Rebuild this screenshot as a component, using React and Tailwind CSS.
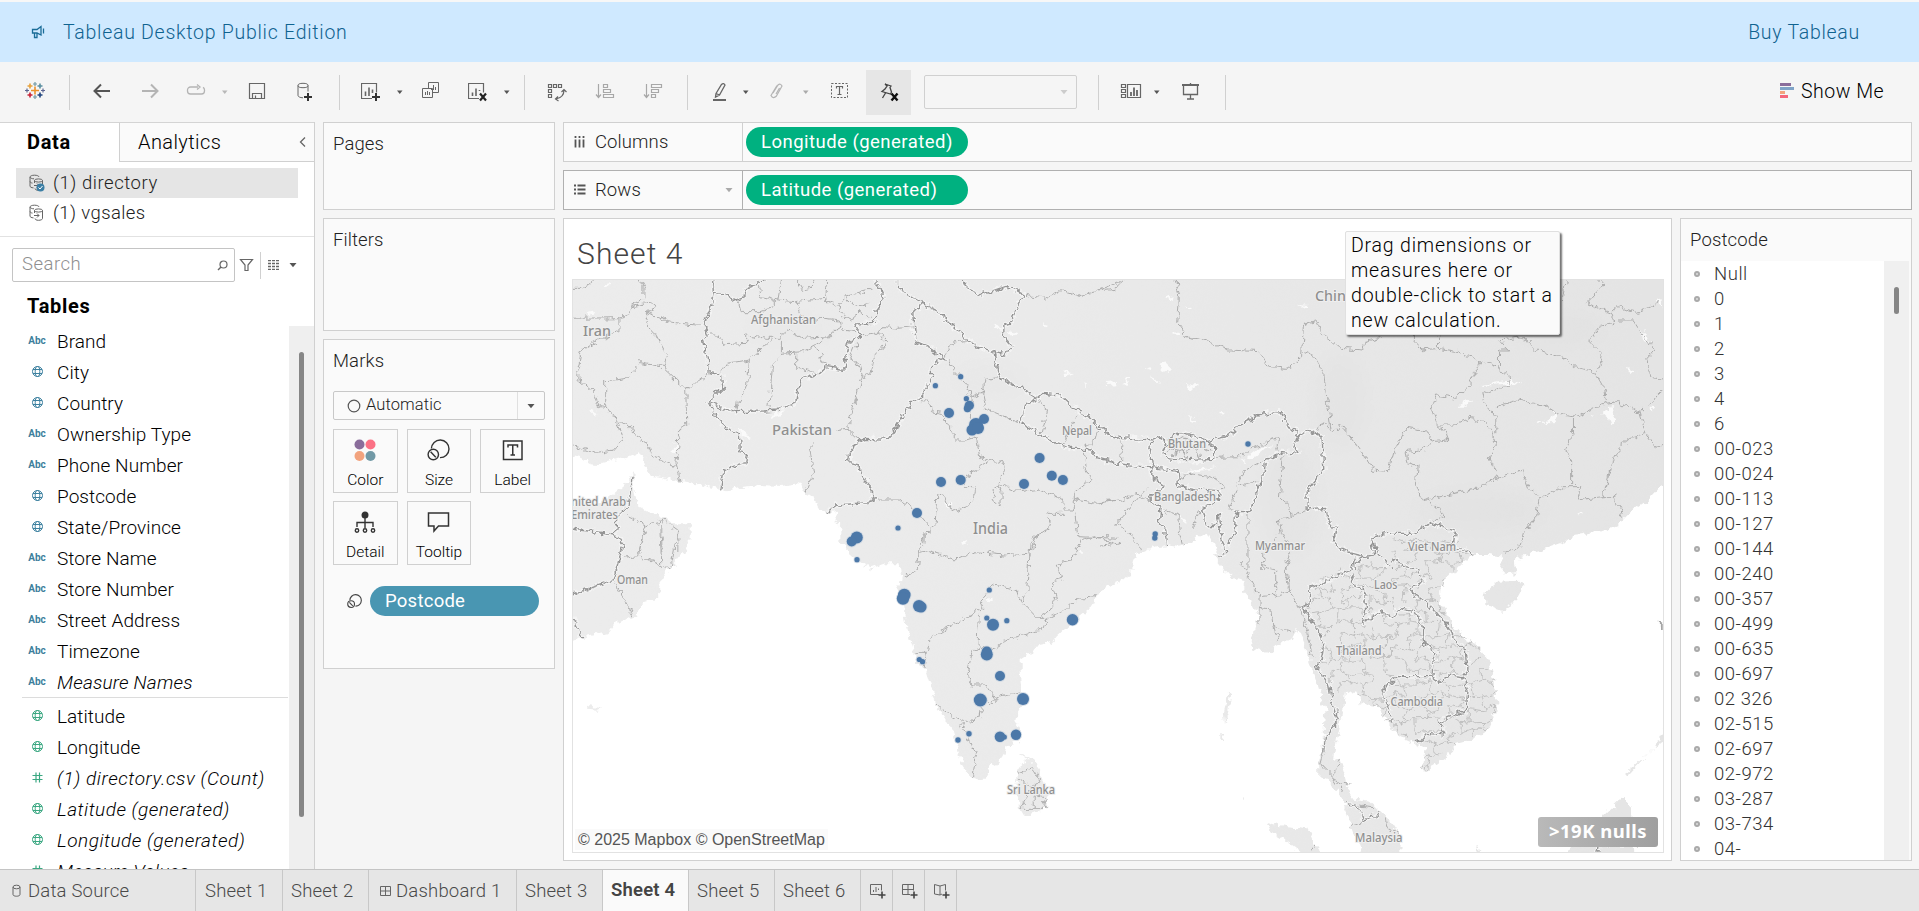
import React from 'react';

const Ic = ({ w = 20, h = 20, className = '', children }) => (
  <svg width={w} height={h} viewBox={`0 0 ${w} ${h}`} fill="none" stroke="#666" strokeWidth="1" className={`shrink-0 ${className}`}>
    {children}
  </svg>
);

const Caret = ({ className = '', color = '#555', big }) => (
  <svg width="8" height="8" viewBox="0 0 8 8" className={`shrink-0 ${className}`}>
    <path d={big ? 'M.5 2h7L4 6.300z' : 'M1 2.500h5.500L3.750 6z'} fill={color} />
  </svg>
);

const Sep = ({ className = '' }) => <div className={`h-[35px] w-px shrink-0 bg-[#d0d0d0] ${className}`} />;

const Plus = ({ x, y, c = '#333' }) => (
  <path d={`M${x - 4} ${y}h8M${x} ${y - 4}v8`} stroke={c} strokeWidth="2" />
);

const SizeGlyph = () => (
  <>
    <path d="M4.4 9.6A8.8 8.8 0 1 1 13 18.6" />
    <circle cx="6.3" cy="15.5" r="5.2" />
    <path d="M3.6 12.8l5.2 5.4" />
  </>
);

function Toolbar() {
  return (
    <div className="flex h-[60px] shrink-0 items-center bg-[#f5f5f5]">
      <Ic className="ml-[25px]">
        <g strokeWidth="1.6">
          <path d="M10 4.5v8M6 8.5h8" stroke="#eb912c" />
          <path d="M10 0v4M8 2h4" stroke="#7199a6" strokeWidth="1.2" />
          <path d="M10 13v4M8 15h4" stroke="#7199a6" strokeWidth="1.2" />
          <path d="M5 1.5v5M2.5 4h5" stroke="#e8a13a" />
          <path d="M15 1.5v5M12.5 4h5" stroke="#5a8ea0" />
          <path d="M5 10.5v5M2.5 13h5" stroke="#c72035" />
          <path d="M15 10.5v5M12.5 13h5" stroke="#1f447e" />
          <path d="M2 6.500v4M0 8.500h4" stroke="#5b6591" strokeWidth="1.200" />
          <path d="M18 6.500v4M16 8.500h4" stroke="#5b6591" strokeWidth="1.200" />
        </g>
      </Ic>
      <Sep className="ml-[24px]" />
      <Ic className="ml-[22px]"><path d="M18 9H3M9 2.500L2.500 9L9 15.500" strokeWidth="2" stroke="#555" /></Ic>
      <Ic className="ml-[29px]"><path d="M1 9h15M10 2.500L16.500 9L10 15.500" strokeWidth="2" stroke="#b4b4b4" /></Ic>
      <Ic className="ml-[25px]"><path d="M12 5H4.500a3 3 0 0 0-3 3v1a3 3 0 0 0 3 3h11a3 3 0 0 0 3-3V8a3 3 0 0 0-1.500-2.600M11 2.500L14 5L11 7.500" stroke="#b4b4b4" strokeWidth="1.300" /></Ic>
      <Caret className="ml-[15px]" color="#b8b8b8" />
      <Ic className="ml-[18px]"><path d="M2.500 1.500h15v15h-15zM5.500 16.500v-5h9v5M8.500 13.500v3" strokeWidth="1.200" /></Ic>
      <Ic className="ml-[29px]">
        <ellipse cx="7" cy="3.500" rx="5" ry="2.200" />
        <path d="M2 3.500v10c0 1 2 2.300 5 2.300M12 3.500v6" />
        <Plus x={12} y={15} />
      </Ic>
      <Sep className="ml-[23px]" />
      <Ic className="ml-[21px]"><path d="M11 16.500H.5v-15h15v9" strokeWidth="1.200" /><path d="M4.500 14V9.500M8 14V5.500M11.500 11V7.500" strokeWidth="1.600" /><Plus x={15} y={15} /></Ic>
      <Caret className="ml-[15px]" />
      <Ic className="ml-[17px]"><path d="M7.500 6.500V.5h10v10h-6M1.500 6.500h10v9h-10z" /><path d="M10.500 8V6M12.500 8V3M14.500 8V5M4.500 13V10M6.500 13V9M8.500 13V10" /></Ic>
      <Ic className="ml-[27px]"><path d="M11 16.500H.5v-15h15v9" strokeWidth="1.200" /><path d="M4.500 14V10.500M8 14V6.500M11.500 9V8" strokeWidth="1.600" /><path d="M12 11.500l6 7M18 11.500l-6 7" stroke="#222" strokeWidth="2.200" /></Ic>
      <Caret className="ml-[15px]" />
      <Sep className="ml-[13px]" />
      <Ic className="ml-[22px]"><path d="M1.500 2.500h3v3h-3zM6.500 2.500h3v3h-3zM11.500 2.500h3v3h-3zM1.500 7.500h3v3h-3zM1.500 12.500h3v3h-3zM17 8c0 5-3 8-8 9M14.500 10L17 7.500L19.500 10M11 14.500L8.500 17L11.500 19" strokeWidth="1.200" /></Ic>
      <Ic className="ml-[28px]"><path d="M3.500 2v13M1 12.500l2.500 3L6 12.500M8.500 2.500h4v3h-4zM8.500 7.500h7v3h-7zM8.500 12.500h10v3h-10z" stroke="#a8a8a8" strokeWidth="1.200" /></Ic>
      <Ic className="ml-[28px]"><path d="M3.500 2v13M1 12.500l2.500 3L6 12.500M8.500 2.500h10v3h-10zM8.500 7.500h7v3h-7zM8.500 12.500h4v3h-4z" stroke="#a8a8a8" strokeWidth="1.200" /></Ic>
      <Sep className="ml-[24px]" />
      <Ic className="ml-[23px]"><path d="M5 11.500L10.500 2.500Q12.500 .5 14 3L8.500 13L4.500 15zM5 11.500L8.500 13" strokeWidth="1.300" /><path d="M2 18h13" strokeWidth="2" /></Ic>
      <Caret className="ml-[11px]" />
      <Ic className="ml-[17px]"><path d="M6 11L11 3Q13.500 1 15 4L9.500 14Q6 17.500 4 13.500L10 3.500M9 12L12.500 6" stroke="#b4b4b4" strokeWidth="1.200" /></Ic>
      <Caret className="ml-[15px]" color="#aaa" />
      <Ic className="ml-[20px]"><rect x="1.500" y="1.500" width="16" height="14" strokeDasharray="2 1.500" /><path d="M6.500 6.500v-2h6v2M9.500 4.500v8M7.500 12.500h4" strokeWidth="1.200" /></Ic>
      <div className="ml-[16px] flex h-[45px] w-[45px] shrink-0 items-center justify-center bg-[#e6e6e6]">
        <Ic><path d="M6 2l6 2-1 1.500 1.500 4.500-1 2L3 9.500 6 7l2-3zM6.500 11L3.500 16" stroke="#444" strokeWidth="1.300" /><path d="M12.500 11.500l6 7M18.500 11.500l-6 7" stroke="#111" strokeWidth="2.400" /></Ic>
      </div>
      <div className="ml-[13px] flex h-[34px] w-[153px] shrink-0 items-center justify-end rounded-[2px] border border-[#d0d0d0] pr-[8px]"><Caret big color="#ccc" /></div>
      <Sep className="ml-[21px]" />
      <Ic w={22} className="ml-[21px]"><path d="M1.500 2.500h4v3h-4zM1.500 7.500h4v3h-4zM1.500 12.500h4v3h-4zM7.500 2.500h13v13h-13z" strokeWidth="1.200" /><path d="M11 14V10M14 14V5.500M17 14V8" strokeWidth="1.800" /></Ic>
      <Caret className="ml-[11px]" />
      <Ic className="ml-[20px]"><path d="M1 3h17" strokeWidth="2" /><path d="M9.500 1v2M2.500 4v8.500h14V4M9.500 12.500v4.500M6 17h7" strokeWidth="1.300" /></Ic>
      <Sep className="ml-[24px]" />
      <svg width="15" height="20" viewBox="0 0 15 20" className="ml-[554px] shrink-0">
        <path d="M0 1h11v3H0z" fill="#8a6d9b" /><path d="M0 5h14v3H0z" fill="#7fa3c7" /><path d="M0 9h5v3H0z" fill="#f2a37e" /><path d="M0 13h8v3H0z" fill="#f4667b" />
      </svg>
      <span className="ml-[6px] text-[19.500px] font-light tracking-[0.500px] text-black">Show Me</span>
    </div>
  );
}

const DbIcon = ({ checked }) => (
  <Ic w={17} h={18}>
    <path d="M11 3c0-1-2-1.800-4.500-1.800S2 2 2 3v9c0 1 1.300 1.700 3.500 1.900M2 3c0 1 2 1.800 4 1.800M2 7.500c0 .8 1 1.400 2.500 1.600" />
    <ellipse cx="10.500" cy="6.500" rx="4" ry="1.600" />
    <path d="M6.500 6.500v2.500M14.500 6.500v8c0 1-1.800 1.800-4 1.800s-3.500-.8-3.500-1.800M6 11.500h5M9 9.500l2 2-2 2" />
    {checked && <><circle cx="12.500" cy="13.500" r="4" fill="#3c7fa5" stroke="none" /><path d="M10.500 13.500l1.500 1.500 2.500-3" stroke="#fff" /></>}
  </Ic>
);

const FieldIcon = ({ kind, green }) => {
  const c = green ? '#3ba882' : '#3d81a0';
  if (kind === 'abc') return <span className="text-[10px] font-bold text-[#3d7f9c]">Abc</span>;
  if (kind === 'num') return <svg width="13" height="13" viewBox="0 0 13 13" stroke={c} strokeWidth="1.200"><path d="M5 1.500v10M8.500 1.500v10M1.500 4.500h10M1.500 8.500h10" /></svg>;
  return (
    <svg width="13" height="13" viewBox="0 0 13 13" fill="none" stroke={c}>
      <circle cx="6.500" cy="6.500" r="5" /><ellipse cx="6.500" cy="6.500" rx="2.300" ry="5" /><path d="M2 4.500h9M2 8.500h9" />
    </svg>
  );
};

const FIELDS = [
  ['abc', 'Brand'], ['geo', 'City'], ['geo', 'Country'], ['abc', 'Ownership Type'], ['abc', 'Phone Number'],
  ['geo', 'Postcode'], ['geo', 'State/Province'], ['abc', 'Store Name'], ['abc', 'Store Number'],
  ['abc', 'Street Address'], ['abc', 'Timezone'], ['abc', 'Measure Names', 'italic tracking-[0.200px]'],
];
const MEASURES = [
  ['geo', 'Latitude'], ['geo', 'Longitude'], ['num', '(1) directory.csv (Count)', 'italic tracking-[0.580px]'],
  ['geo', 'Latitude (generated)', 'italic tracking-[0.500px]'], ['geo', 'Longitude (generated)', 'italic tracking-[0.500px]'], ['num', 'Measure Values', 'italic tracking-[0.200px]'],
];

const Field = ({ f, green }) => (
  <div className="flex h-[31px] shrink-0 items-center">
    <span className="flex w-[29px] justify-center pl-[1px]"><FieldIcon kind={f[0]} green={green} /></span>
    <span className={`ml-[6px] whitespace-nowrap pt-[3px] text-[19px] font-light text-black ${f[2] || 'tracking-[0.070px]'}`}>{f[1]}</span>
  </div>
);

function DataPane() {
  return (
    <div className="flex w-[315px] shrink-0 flex-col border-r border-[#d0d0d0] bg-white">
      <div className="flex h-[40px] shrink-0 border-t border-[#d4d4d4]">
        <div className="w-[119px] pl-[27px] pt-[4px] text-[20px] font-bold tracking-[0.700px] text-black">Data</div>
        <div className="flex flex-1 justify-between border-b border-l border-[#d0d0d0] bg-[#fafafa] pl-[18px] pr-[7px] pt-[4px]">
          <span className="text-[20px] font-light tracking-[0.400px] text-black">Analytics</span>
          <Ic w={8} h={14} className="mt-[8px]"><path d="M6 2.500L1.500 7L6 11.500" strokeWidth="1.300" /></Ic>
        </div>
      </div>
      <div className="ml-[16px] mt-[6px] flex h-[30px] w-[282px] shrink-0 items-center bg-[#e5e5e5] pl-[12px]">
        <DbIcon checked /><span className="ml-[8px] pt-[2px] text-[18.500px] font-light tracking-[0.550px] text-[#222]">(1) directory</span>
      </div>
      <div className="ml-[16px] flex h-[30px] shrink-0 items-center pl-[12px]">
        <DbIcon /><span className="ml-[8px] pt-[2px] text-[18.500px] font-light tracking-[0.400px] text-[#222]">(1) vgsales</span>
      </div>
      <div className="mt-[8px] h-px shrink-0 bg-[#e2e2e2]" />
      <div className="mt-[11px] flex h-[34px] shrink-0 items-center pl-[12px]">
        <div className="flex h-[34px] w-[223px] items-center justify-between rounded-[2px] border border-[#c4c4c4] pl-[9px] pr-[6px]">
          <span className="text-[18.500px] font-light tracking-[0.500px] text-[#8f8f8f]">Search</span>
          <Ic w={11} h={11}><circle cx="6.500" cy="4.500" r="3.500" strokeWidth="1.200" /><path d="M4 7L1 10" strokeWidth="1.400" /></Ic>
        </div>
        <Ic w={15} h={14} className="ml-[4px]"><path d="M1.500 1.500h12l-4.500 5.500v5.500h-3V7z" strokeWidth="1.200" /></Ic>
        <div className="ml-[6px] h-[27px] w-px bg-[#d0d0d0]" />
        <Ic w={12} h={10} className="ml-[7px]"><path d="M0 .5h12M0 3.500h12M0 6.500h12M0 9.500h12" strokeWidth="1.400" strokeDasharray="3 1" /></Ic>
        <Caret big className="ml-[9px]" />
      </div>
      <div className="mt-[10px] h-[27px] shrink-0 pl-[27px] text-[20px] font-bold leading-[28px] tracking-[0.700px] text-black">Tables</div>
      <div className="flex h-[550px] shrink-0 overflow-hidden">
        <div className="w-[289px] overflow-hidden pl-[22px] pt-[6px]">
          {FIELDS.map((f) => <Field key={f[1]} f={f} />)}
          <div className="mb-[2px] h-px w-[266px] bg-[#dcdcdc]" />
          {MEASURES.map((f) => <Field key={f[1]} f={f} green />)}
        </div>
        <div className="mt-[7px] w-[25px] bg-[#efefef] pl-[10px] pt-[26px]"><div className="h-[465px] w-[5px] rounded-full bg-[#868686]" /></div>
      </div>
    </div>
  );
}

const Card = ({ title, className = '', children }) => (
  <div className={`shrink-0 border border-[#d0d0d0] bg-[#fafafa] px-[9px] ${className}`}>
    <div className="pt-[8px] text-[18.500px] font-light leading-[26px] tracking-[0.100px] text-[#222]">{title}</div>
    {children}
  </div>
);

const MarkButton = ({ label, icon }) => (
  <div className="flex h-[64px] flex-col items-center border border-[#d0d0d0] pt-[9px]">
    {icon}
    <span className="mt-[8px] text-[15.500px] font-light leading-[20px] text-black">{label}</span>
  </div>
);

function Cards() {
  return (
    <div className="ml-[8px] flex w-[232px] shrink-0 flex-col gap-[8px]">
      <Card title="Pages" className="h-[88px]" />
      <Card title="Filters" className="h-[113px]" />
      <Card title="Marks" className="h-[330px]">
        <div className="mt-[17px] flex h-[29px] w-[212px] items-center rounded-[2px] border border-[#c8c8c8]">
          <Ic w={14} h={14} className="ml-[13px]"><circle cx="7" cy="7" r="5.800" stroke="#555" strokeWidth="1.200" /></Ic>
          <span className="ml-[5px] text-[16.500px] font-light tracking-[0.100px] text-[#222]">Automatic</span>
          <div className="ml-auto flex h-full w-[27px] items-center justify-center border-l border-[#e0e0e0]"><Caret big /></div>
        </div>
        <div className="mt-[9px] grid w-[212px] grid-cols-3 gap-x-[9px] gap-y-[8px]">
          <MarkButton label="Color" icon={<svg width="22" height="23" viewBox="0 0 22 23"><circle cx="5.500" cy="5.500" r="5" fill="#8a6d9b" /><circle cx="16.500" cy="5.500" r="5" fill="#fb7185" /><circle cx="5.500" cy="17" r="5" fill="#f2a37e" /><circle cx="16.500" cy="17" r="5" fill="#7199a6" /></svg>} />
          <MarkButton label="Size" icon={<Ic w={23} h={23}><g stroke="#333" strokeWidth="1.400"><SizeGlyph /></g></Ic>} />
          <MarkButton label="Label" icon={<Ic w={22} h={23}><g stroke="#333" strokeWidth="1.500"><rect x="1.500" y="2" width="18.500" height="18.500" /><path d="M6 8.500V6h9.500v2.500M10.750 6v10M8.500 16h4.500" /></g></Ic>} />
          <MarkButton label="Detail" icon={<Ic w={22} h={23}><g stroke="#333" strokeWidth="1.400"><circle cx="11" cy="4" r="2.800" fill="#333" /><path d="M11 6v11M3 16v-4.500h16V16" /><circle cx="3" cy="19.500" r="1.700" /><circle cx="11" cy="19.500" r="1.700" /><circle cx="19" cy="19.500" r="1.700" /></g></Ic>} />
          <MarkButton label="Tooltip" icon={<Ic w={23} h={23}><path d="M1.500 2h20v13H11.500L7 20v-5H1.500z" stroke="#333" strokeWidth="1.500" /></Ic>} />
        </div>
        <div className="mt-[21px] flex h-[30px] items-center">
          <svg width="15" height="15" viewBox="0 0 23 23" fill="none" stroke="#444" strokeWidth="1.700" className="ml-[14px]"><SizeGlyph /></svg>
          <div className="ml-[8px] h-[30px] w-[169px] rounded-full bg-[#4996b2] pl-[15px] text-[18.500px] leading-[30px] tracking-[0.250px] text-white">Postcode</div>
        </div>
      </Card>
    </div>
  );
}

function Shelf({ title, icon, pill, dark, caret }) {
  return (
    <div className={dark ? 'flex h-[40px] shrink-0 items-center border border-[#b0b0b0] bg-[#fafafa]' : 'flex h-[40px] shrink-0 items-center border border-[#d0d0d0] bg-[#fafafa]'}>
      <div className={dark ? 'flex h-full w-[179px] items-center border-r border-[#b0b0b0]' : 'flex h-full w-[179px] items-center border-r border-[#d0d0d0]'}>
        {icon}
        <span className="ml-[9px] pt-[2px] text-[18.500px] font-light tracking-[0.100px] text-[#222]">{title}</span>
        {caret && <Caret big className="ml-auto mr-[9px]" color="#aaa" />}
      </div>
      <div className="ml-[3px] h-[30px] w-[222px] rounded-full bg-[#00b180] pl-[15px] text-[18.500px] leading-[30px] tracking-[0.470px] text-white">{pill}</div>
    </div>
  );
}

const WEST = 'translate(560 210) scale(.35714 .33333)';
const WEST2 = 'translate(560 530) scale(.35714 .33333)';
const EAST = 'translate(1100 270) scale(.3699 .33333)';
const EAST2 = 'translate(1100 560) scale(.3699 .33333)';

const LAND = [
  [WEST, 'M20 180H1600V1060H940L850 1060L785 990L810 985L845 975L850 950L830 965L790 955L765 930L780 905L750 910L722 890L710 860L680 850L670 820L620 828L560 825L500 832L450 840L400 825L330 815L290 805L255 800L243 770L235 740L215 730L190 740L150 750L110 762L85 760L60 745L20 735z'],
  [WEST, 'M20 890L100 885L140 860L180 825L205 788L212 850L220 890L260 912L300 925L340 960L366 985L350 1030H20z'],
  [WEST2, 'M20 -20H366V30L340 70L300 125L275 165L275 205L230 220L215 260L160 275L140 305L20 332z'],
  [WEST2, 'M785 30L800 60L830 90L870 115L925 95L935 35L945 30L950 90L955 140L945 190L960 220L970 290L990 360L1000 400L1025 420L1040 470L1055 530L1080 570L1100 610L1115 660L1130 710L1150 740L1175 750L1200 735L1205 705L1240 690L1250 650L1285 635L1290 600L1275 575L1280 550L1290 530L1310 510L1295 480L1290 430L1290 390L1325 365L1340 345L1380 335L1390 320L1410 300L1450 265L1480 240L1510 190L1535 165L1600 135V-20H785z'],
  [WEST2, 'M1285 670L1300 675L1335 705L1350 750L1368 790L1362 830L1330 850L1300 858L1285 830L1278 770L1285 710L1310 690z'],
  [WEST2, 'M75 527L95 532L118 534L105 542L85 540z'],
  [EAST, 'M-20 0H1560V620L1521 640L1480 690L1440 720L1400 765L1350 785L1280 795L1250 820L1200 840L1130 860L1122 880L1125 910L1085 910L1090 860L1050 855L1010 855L980 880L960 910H340L318 880L320 850L305 820L290 785L275 790L245 820L210 830L180 825L150 830L120 845L95 855L85 880L60 910H-20z'],
  [EAST2, 'M-20 -20H88L85 20L78 50L-20 100z'],
  [EAST2, 'M305 -20L345 35L365 55L395 65L385 95L410 125L430 170L415 210L408 265L455 280L480 255L520 235L530 200L545 240L565 290L575 330L590 380L610 450L605 500L605 560L590 600L590 650L615 660L640 690L655 720L680 800L710 890H810L815 830L790 790L760 755L730 725L690 720L670 690L665 650L650 600L630 595L640 540L650 490L660 430L665 400L695 390L705 430L750 440L780 480L790 510L820 535L850 550L880 565L872 635L900 620L950 580L960 550L1010 535L1050 505L1075 440L1065 370L1050 300L1020 255L985 235L950 190L945 165L915 125L920 75L940 45L960 20L990 -20z'],
  [EAST2, 'M1088 -20L1088 5L1100 45L1120 40L1122 -20zM1042 98L1075 65L1140 62L1142 85L1120 130L1085 152L1045 135zM450 785L480 795L560 805L575 840L605 890H560L510 850L465 820zM1255 890L1290 840L1340 790L1400 725L1415 705L1435 745L1445 890zM1420 640L1500 560L1530 500V535L1480 580L1425 645zM349 395L355 400L345 470L338 495L335 460zM328 528h6v12h-6zM385 708l8 4-4 12zM1015 858l10 4 3 14-10-4z'],
];

const NATIONAL = [
  [WEST, 'M430 200L432 250L425 285L412 320L400 345L412 375L402 395L412 440L415 488L455 495L458 530L435 555L415 580L490 605L565 603L610 600L660 580L665 545L680 505L725 490L745 470L795 478L800 440L810 395L845 378L825 342L880 340L885 300L905 270L900 240L885 222V200M432 250L460 255L490 270L515 260L520 235L560 220L580 205M415 580L440 620L465 655L502 670L505 725L525 730L520 758L480 770L458 785L450 838'],
  [WEST, 'M750 908L775 885L860 878L880 870L870 830L840 790L838 762L808 755L810 735L835 695L855 685L915 688L945 645L985 575L1005 570L1040 505L1040 465L1075 445L1040 415L995 395L990 350L988 310L1015 280L945 235V200M1015 280L1060 305L1140 390L1170 410L1215 425L1225 480L1235 505L1290 535L1335 565L1350 550L1400 555L1440 595L1480 620L1510 655L1568 690M1335 565L1300 590L1290 635L1340 670L1390 700L1430 715L1480 715L1500 740L1568 760M1210 425L1245 435L1265 410L1240 375L1240 345L1265 340L1275 300L1300 255L1250 228L1180 255L1140 235L1125 200'],
  [WEST2, 'M20 -4L155 12L177 45L148 152L20 198M30 250L62 325M155 12L160 -40L190 -70L205 -160'],
  [EAST, 'M0 465L35 500L80 505L140 510L165 500L175 520L170 545L200 495L235 490L290 515L340 500L400 450L440 432L490 428L510 470L540 495L560 480L600 500L605 600L560 660L560 720L610 715L620 765L640 770L630 820L680 850L715 860L740 855L735 805L775 790L850 790L895 757L960 785L955 830L1010 850M0 570L50 580L110 590L140 590L135 555L140 510M170 545L180 565L230 572L310 568L310 530L290 515M140 590L175 595L210 605L212 650L260 660L325 665L320 690L275 715L285 770L310 765L320 735L325 780L340 850L320 860M140 590L140 620L175 650L145 665L135 690L165 715L160 760L175 780L180 825M540 495L525 520L535 550L490 545L445 575L440 620L425 660L405 725L370 725L365 790L345 825M735 805L750 850L790 900M715 860L690 880L690 900'],
  [EAST2, 'M690 -10L680 30L655 40L600 70L568 80L565 130L548 140L590 210L605 250L598 300L585 320L620 370L630 430L645 480L610 530L605 570M680 45L690 80L715 85L718 150L710 190L755 155L790 170L810 145L850 155L870 190L875 250L905 275L900 350M790 0L830 20L860 30L875 65L835 90L885 130L945 205L960 240L990 270L995 330L980 350M788 485L780 440L765 390L800 350L895 350L920 370L940 345L980 350L995 390L990 450L940 470L920 490L930 525L885 520L870 540L850 545M665 735L700 740L715 780L745 770L752 750M1345 880L1350 850L1450 853M1519 183V210'],
];

const PROVINCES = [
  [WEST, 'M20 325L180 323L200 290L235 265L235 230L220 200M165 323L165 365L120 385L60 420L50 480L50 505L95 545L110 590L128 592L128 515L185 505L225 458L285 470L300 440L265 370L240 340L250 300L270 290L260 278L200 290M250 305L300 335L380 345L400 345M285 470L352 537L385 515L415 490M352 537L355 650L335 660L325 760L340 820M128 592L160 640L190 635L205 670L245 700L260 740L325 770M160 640L175 690L150 720L100 730L30 705M36 235L60 235L95 212'],
  [WEST, 'M555 225L560 260L610 270L660 275L740 265L780 290L800 260L870 240M500 265L510 305L560 305L600 290V270M750 280L745 250L750 205M660 275L670 310L690 330L740 325L785 330L790 360L830 365M412 375L440 375L455 405L520 400L520 375L580 385L610 385L640 360L680 385L760 380M450 490L465 460L530 450L590 390M530 450L525 530L500 570L495 605M585 592L595 465L620 440L620 390M620 430L680 425L715 405L750 380L785 350M660 430V470L725 490M715 410L745 470M660 205L680 240L700 235L715 205M780 290L800 330L840 310L870 320M800 260L820 290L870 280M610 270L620 210M845 378L890 370L915 395L880 440L870 490L850 500L840 460L810 450L830 400'],
  [WEST, 'M830 455L845 500L825 580L805 655L770 660M805 655L840 690M880 370L910 350L945 355L990 350M720 690L700 720L710 790L685 850M1075 445L1100 400L1140 390M1085 445L1105 490L1135 520L1150 560L1185 545L1190 505L1235 500M1180 545L1190 595L1290 640M1005 570L1035 575L1040 605L1070 610L1090 650L1105 690L1140 690L1170 680M1150 560L1155 620M1165 680L1175 740L1240 760L1245 790L1230 820L1290 845L1340 838L1410 870L1415 900L1440 900L1440 850L1490 805L1470 770L1465 715M1205 750L1130 805L1130 830L1165 830L1160 865L1140 890L1095 905L1080 860L1055 855L1050 950L1020 975L1018 1010M1225 820L1210 870L1235 890V850L1225 820M880 870L950 870L1000 905L1035 950M1360 910H1415M1360 910L1375 950L1330 985L1320 1020M1440 870L1500 880L1568 870M1440 900L1450 980L1568 985M1340 570L1365 600L1350 670M1450 620L1430 650L1405 710M1510 655L1500 690L1465 715M1300 255L1360 265L1400 242L1450 258L1500 245L1568 215M190 920L240 945L290 930L330 960V1020M240 945L220 1020M285 930V1020'],
  [WEST2, 'M1018 20L1005 70L1035 65L1110 90L1160 65L1240 75L1300 70L1315 85L1310 180L1295 215L1340 265L1370 240L1390 200L1375 155L1405 150L1395 100L1430 90L1460 30L1500 20L1568 45M1005 70L1000 120L960 140M1315 85L1320 30L1360 0M1295 215L1275 180L1210 160L1190 200L1175 240L1100 285L1030 330L1025 370H998M1025 370L1020 410M1175 240L1170 355L1210 358L1260 325L1350 300L1365 265L1340 265M1365 265L1420 235L1450 205L1500 200M1170 355L1155 365L1140 430L1155 465L1190 465L1220 505L1290 485M1220 505L1205 525L1190 500M1180 535L1175 565L1130 575L1085 550L1050 520M1120 578L1145 620L1165 680L1155 740M170 85L220 80L285 105L310 115M232 0L220 80M280 0L285 105M330 0L310 115M148 152L208 260M1285 730L1325 712L1345 755L1320 770L1310 800L1290 835H1355L1365 800L1325 790V835M1285 745L1320 770'],
  [EAST, 'M0 60L40 55L70 25M200 20L215 70L210 160L240 205L290 215L350 240L430 245L460 290L510 295L545 260L550 165L585 155L600 190L650 235L710 240L715 215L765 200M550 245L580 260L605 310L615 400L625 480M580 495L605 455L630 490L650 465L690 520L740 600L780 605L795 545L830 475L880 485L900 515L940 510L930 480L910 465M900 515L865 540L825 545L830 580L860 590L855 650L875 690L920 715L930 740L895 757M870 690L960 670L1030 650L1080 620L1140 600L1160 660L1190 685L1250 650L1300 650L1290 690L1360 680L1390 680L1415 740M1190 685L1180 740L1145 790L1135 830L1095 850M910 465L960 465L1000 445L1040 455L1060 490L1070 530L1050 560L1075 610M910 460L895 415L910 375L960 385L1000 345L1030 275L970 245L915 235L870 240L850 215V190M1030 275L1080 295L1110 320L1095 350L1035 370L1040 400L1070 440V490M1070 410L1130 390L1200 405L1230 430L1280 440L1280 490L1260 530L1275 570V645M1080 295L1080 240L1105 240L1080 210L1145 200L1180 240L1260 265L1280 290L1340 310L1365 360L1370 400L1280 440M1340 310L1360 260L1320 215L1350 170L1390 160L1380 130L1315 100L1360 45L1340 20M1380 130L1400 110L1450 130L1510 100M1400 150L1440 150L1465 190L1500 240L1475 270L1490 320L1530 325M1370 400L1400 395L1460 430L1475 490L1500 530H1530M1475 490L1420 510L1380 590L1360 680M1460 430L1510 370L1530 350M915 235V200M1262 20L1250 90'],
  [EAST, 'M495 560L485 680L515 710L520 740L560 720M515 740L485 750L490 790L515 850L500 900M400 725V900M405 725L350 715L370 650L425 635M370 640L400 595L445 570M210 620L250 612L300 620L340 650L325 665M310 562L380 560L420 530L480 505L475 545M130 690L100 670L60 690L0 695M130 650L60 740L45 760L90 800L110 840M0 825L50 820M165 715L210 735L215 790L225 830M250 770L275 710M60 510L55 580M320 430M180 545L200 535L230 545L260 530L310 545M195 570L205 540M235 570L230 545M270 568L262 530M200 500L240 510L285 520M440 900L440 850L485 790'],
  [EAST2, 'M380 0L430 110V190M430 145L465 150L470 200L480 240M500 0L510 90L545 150L575 290M430 110L475 105L520 90M475 105V30L440 20V-10M475 200L520 215M605 570L595 610L630 650L655 690M630 650L650 600M655 670L680 672M700 735L735 740M680 800L720 780M770 770L775 800L805 820M570 872L585 850'],
];

const LAKES = [
  [WEST, 'M120 228l20-6 4 6-18 4zM78 306l14-4 4 8-14 6zM440 585l30 4 20 12-20 4zM505 655l18 12 8 18-22-10zM590 612l45-12-10 12-28 8zM320 700l10 10-4 20-8-10zM1215 345l20 8 14 10-22-4zM1350 340l16 4-6 8zM1412 484l24 6-16 6zM1464 520l14 4-8 4zM1530 516l20-2 6 12-24 2zM1076 870l18 8-8 24zM80 600l26 8-6 8zM1255 365l24 8-12 6z'],
  [WEST2, 'M1195 200l8 8 10-2-6 8-16-4zM1120 38l12-8 10 6-10 12zM1450 62l14 2-4 10z'],
  [EAST, 'M125 296l14-4-4 8zM158 292l18-18 18 18-12 14zM15 335l26 4-22 8zM62 345l16-28 2 8-10 22zM134 318l26 20-10-2zM232 345l34-4-22 20zM240 440l26 12-14 4zM534 104l30 4-6 8zM232 112l18-2 0 10zM200 190l20 4-14 8zM178 84l18-8-2 14zM1180 450l30 8 16-30 10 8-8 24-40-2zM1358 430l24-24 10 30 6 14-16 16-8-22zM1030 345l80-14 36 12-36-4-78 10zM970 410l36-24-18 24zM1420 298l24 2-10 12zM1462 180l20 20 6 22-20-12zM1490 410l14 2-10 10zM400 560l30-26 40-12-30 20-30 28zM380 572l16-4-6 8zM215 608l60-10 40-6-40 14zM1290 730l14-4 0 12zM200 730l20 8 22 16-4 4zM325 425l10 4-8 8zM1322 432l16 2-4 6zM1500 95l18-8 2 28z'],
];

const MESH = (() => {
  let s = 7;
  const r = () => ((s = (s * 16807) % 2147483647) / 2147483647 - 0.5);
  const P = [];
  for (let j = 0; j < 22; j += 1) {
    P.push([]);
    for (let i = 0; i < 20; i += 1) P[j].push([1296 + i * 11 + r() * 8, 540 + j * 12 + r() * 9]);
  }
  let d = '';
  for (let j = 0; j < 21; j += 1) {
    for (let i = 0; i < 19; i += 1) {
      const [x, y] = P[j][i];
      if (r() > -0.3) d += `M${x.toFixed(1)} ${y.toFixed(1)}L${P[j][i + 1].map((v) => v.toFixed(1)).join(' ')}`;
      if ((i + j) % 2 === 0) d += `M${x.toFixed(1)} ${y.toFixed(1)}L${P[j + 1][i].map((v) => v.toFixed(1)).join(' ')}`;
    }
  }
  return d;
})();

const LABELS = [
  ['Iran', 583, 336, 28, 15], ['Afghanistan', 751, 324, 65, 12.5], ['Pakistan', 772, 435, 60, 15], ['Nepal', 1062, 434.5, 30, 12],
  ['India', 973, 533.5, 35, 15.5], ['United Arab', 563, 505.5, 63, 12], ['Emirates', 571, 519, 47, 12], ['Oman', 617, 584, 31, 12],
  ['Sri Lanka', 1007, 794, 48, 12], ['China', 1315, 301, 39, 15], ['Bhutan', 1168, 447.5, 38, 12], ['Bangladesh', 1154, 500.5, 62, 12],
  ['Myanmar', 1255, 549.5, 50, 12], ['Viet Nam', 1408, 551, 48, 12], ['Laos', 1374, 588.5, 23.5, 12], ['Thailand', 1336, 655, 45.5, 12],
  ['Cambodia', 1390.5, 705.5, 52.5, 12], ['Malaysia', 1355, 841.5, 47.5, 12],
];

const DOTS = [
  [960.7, 376.7, 2.6], [935.4, 385.7, 2.6], [966.4, 398.7, 2.6], [969.3, 405.5, 4.7], [967.5, 408.5, 3.7], [949, 413, 5], [984, 419, 5],
  [976, 425, 7], [972, 430, 5.5], [978, 428, 6], [1039.6, 458, 5], [1051.8, 475.7, 5], [1062.9, 480, 5], [1024, 484, 5], [960.7, 480, 5],
  [941, 482, 5], [917, 513, 5], [898, 528, 2.6], [856.8, 537.5, 6], [851.7, 541.5, 5], [857, 559.7, 2.6], [904.3, 595, 6.3], [903, 598.500, 6.2],
  [919, 606, 6], [921, 607, 5.6], [989.3, 590, 2.6], [986.8, 618, 2.6], [993, 624.7, 6], [1006.8, 620.7, 2.6], [1072.5, 619.700, 5.700],
  [986.8, 651.500, 5], [986.8, 654.500, 6], [1000, 676, 5], [980.300, 700, 6.500], [1023, 699, 6], [919.300, 659.500, 2.600], [922.500, 661.700, 2.600],
  [969, 733.700, 2.700], [958, 740, 2.700], [1000, 736.700, 5.300], [1004.300, 737, 2.600], [1016, 734.700, 5.200], [1248, 444, 2.700], [1155.200, 534, 2.700], [1154.800, 538, 2.700],
];

const Lines = ({ items, ...p }) => items.map(([t, d]) => <path key={d} d={d} transform={t} fill="none" vectorEffect="non-scaling-stroke" strokeLinejoin="round" {...p} />);

function MapView() {
  return (
    <svg width="1090" height="572" viewBox="573 280 1090 572" className="block">
      <defs>
        <linearGradient id="tone" gradientUnits="userSpaceOnUse" x1="572" y1="560" x2="1662" y2="400">
          <stop offset="0" stopColor="#ececec" /><stop offset=".45" stopColor="#eaeaea" /><stop offset="1" stopColor="#e4e4e4" />
        </linearGradient>
        <filter id="rough" filterUnits="userSpaceOnUse" x="560" y="270" width="1120" height="600" colorInterpolationFilters="sRGB">
          <feTurbulence type="fractalNoise" baseFrequency=".16" numOctaves="2" seed="4" result="n" />
          <feDisplacementMap in="SourceGraphic" in2="n" scale="9" xChannelSelector="R" yChannelSelector="G" />
        </filter>
        <filter id="soft" x="-80%" y="-80%" width="260%" height="260%"><feGaussianBlur stdDeviation="12" /></filter>
        <clipPath id="ground">{LAND.map(([t, d]) => <path key={d} d={d} transform={t} />)}</clipPath>
        <clipPath id="indochina"><path transform={EAST2} d="M605 50L690 0L790 0L780 -60L895 -100L960 -70L1000 -10L940 45L915 125L950 190L1020 255L1065 370L1075 440L1050 505L960 550L872 635L880 565L790 510L750 440L705 430L695 390L640 395L585 320L600 240L550 140L568 80z" /></clipPath>
      </defs>
      <g filter="url(#rough)">
        <g clipPath="url(#ground)">
          <rect x="560" y="265" width="1120" height="610" fill="url(#tone)" />
          <g filter="url(#soft)" fill="#000" opacity=".012">
            <ellipse cx="1290" cy="500" rx="30" ry="60" /><ellipse cx="1480" cy="510" rx="70" ry="20" /><ellipse cx="790" cy="330" rx="50" ry="12" />
            <ellipse cx="1340" cy="400" rx="26" ry="50" /><ellipse cx="1560" cy="330" rx="50" ry="14" /><ellipse cx="990" cy="380" rx="40" ry="14" />
          </g>
        </g>
        <Lines items={LAKES} fill="#fafafa" />
        <g clipPath="url(#indochina)"><path d={MESH} fill="none" stroke="#b9b9b9" strokeWidth=".85" /></g>
        <Lines items={PROVINCES} stroke="#adadad" strokeWidth="1" />
        <Lines items={NATIONAL} stroke="#f4f4f4" strokeWidth="4" />
        <Lines items={NATIONAL} stroke="#959595" strokeWidth="1.400" />
      </g>
      <g fontFamily="'Noto Sans','Open Sans',sans-serif" fill="#8f8f8f" fontWeight="500" stroke="#efefef" strokeWidth="2" paintOrder="stroke">
        {LABELS.map(([t, x, y, w, s]) => <text key={t} x={x} y={y} textLength={w} lengthAdjust="spacingAndGlyphs" fontSize={s}>{t}</text>)}
      </g>
      <g fill="#c9d4e0" opacity=".7">{DOTS.map(([x, y, r]) => <circle key={`${x}-${y}`} cx={x} cy={y} r={r + 0.9} />)}</g>
      <g fill="#4c78a8">{DOTS.map(([x, y, r]) => <circle key={`${x}-${y}`} cx={x} cy={y} r={r} />)}</g>
    </svg>
  );
}

const CODES = ['Null', '0', '1', '2', '3', '4', '6', '00-023', '00-024', '00-113', '00-127', '00-144', '00-240', '00-357', '00-499', '00-635', '00-697', '02 326', '02-515', '02-697', '02-972', '03-287', '03-734', '04-'];

function Main() {
  return (
    <div className="ml-[8px] flex w-[1349px] shrink-0 flex-col">
      <Shelf title="Columns" pill="Longitude (generated)" icon={<Ic w={12} h={14} className="ml-[10px]"><path d="M1.500 1v2M5.500 1v2M9.500 1v2M1.500 4.500v8M5.500 4.500v8M9.500 4.500v8" strokeWidth="1.800" stroke="#555" /></Ic>} />
      <div className="h-[8px] shrink-0" />
      <Shelf dark caret title="Rows" pill="Latitude (generated)" icon={<Ic w={13} h={12} className="ml-[9px]"><path d="M1 1.500h2M1 5.500h2M1 9.500h2M4.500 1.500h8M4.500 5.500h8M4.500 9.500h8" strokeWidth="1.800" stroke="#555" /></Ic>} />
      <div className="mt-[8px] flex h-[643px] shrink-0">
        <div className="relative w-[1109px] shrink-0 border border-[#d0d0d0] bg-white pl-[8px]">
          <div className="h-[60px] pl-[5px] pt-[14px] text-[30px] font-light leading-[42px] tracking-[1.100px] text-[#444]">Sheet 4</div>
          <div className="relative h-[574px] w-[1092px] border border-[#e2e2e2]">
            <MapView />
            <div className="absolute bottom-[2px] left-[2px] h-[21px] bg-[#fafafa]/90 px-[3px] font-['Liberation_Sans'] text-[16px] leading-[21px] text-[#555]">© 2025 Mapbox © OpenStreetMap</div>
            <div className="absolute bottom-[5px] right-[5px] flex h-[30px] w-[120px] items-center justify-center rounded-[3px] bg-linear-to-r from-[#b9b9b9] to-[#9f9f9f] pb-[2px] font-['Noto_Sans'] text-[18.500px] font-bold tracking-[0.500px] text-white">&gt;19K nulls</div>
          </div>
          <div className="absolute left-[781px] top-[12px] h-[104px] w-[215px] whitespace-nowrap rounded-[2px] border border-[#e0e0e0] bg-[#fafafa] pl-[5px] pt-px text-[19.500px] font-light leading-[25px] tracking-[0.800px] text-black shadow-[2px_2px_2px_rgba(0,0,0,0.55)]">
            Drag dimensions or<br />measures here or<br />double-click to start a<br />new calculation.
          </div>
        </div>
        <div className="ml-[8px] flex w-[232px] shrink-0 flex-col overflow-hidden border border-[#d0d0d0] bg-[#fafafa]">
          <div className="h-[42px] shrink-0 pl-[9px] pt-[8px] text-[18.500px] font-light leading-[26px] tracking-[0.150px] text-[#222]">Postcode</div>
          <div className="flex h-[599px] overflow-hidden">
            <div className="w-[203px] overflow-hidden bg-white pt-[1px]">
              {CODES.map((c) => (
                <div key={c} className="flex h-[25px] items-center pl-[13px]">
                  <span className="mb-[2px] h-[6px] w-[6px] rounded-full border-2 border-[#aaa] bg-[#ddd]" />
                  <span className="ml-[14px] text-[18.500px] font-light tracking-[0.550px] text-[#333]">{c}</span>
                </div>
              ))}
            </div>
            <div className="w-[25px] bg-[#f0f0f0] pl-[10px] pt-[26px]"><div className="h-[27px] w-[5px] rounded-full bg-[#868686]" /></div>
          </div>
        </div>
      </div>
    </div>
  );
}

const Tab = ({ className, children }) => (
  <div className={`flex h-full shrink-0 items-center border-r border-[#c8c8c8] ${className}`}>{children}</div>
);

function Tabs() {
  return (
    <div className="flex h-[42px] shrink-0 border-t border-[#c4c4c4] bg-[#e6e6e6] text-[18.500px] font-light tracking-[0.200px] text-[#4a4a4a]">
      <Tab className="w-[196px] pl-[12px]"><Ic w={10} h={14}><ellipse cx="4.500" cy="3" rx="3.500" ry="1.800" /><path d="M1 3v7.500c0 2.300 7 2.300 7 0V3" /></Ic><span className="ml-[6px] pt-[2px]">Data Source</span></Tab>
      <Tab className="w-[87px] pl-[9px] pt-[2px]">Sheet 1</Tab>
      <Tab className="w-[86px] pl-[8px] pt-[2px]">Sheet 2</Tab>
      <Tab className="w-[148px] pl-[10px]"><Ic w={13} h={14}><path d="M1.500 2.500h10v9h-10zM6.500 2.500v9M1.500 7h10" /></Ic><span className="ml-[4px] pt-[2px]">Dashboard 1</span></Tab>
      <Tab className="w-[86px] pl-[8px] pt-[2px]">Sheet 3</Tab>
      <Tab className="w-[86px] bg-[#fafafa] pl-[8px] font-semibold text-[#444]">Sheet 4</Tab>
      <Tab className="w-[86px] pl-[8px] pt-[2px]">Sheet 5</Tab>
      <Tab className="w-[86px] pl-[8px] pt-[2px]">Sheet 6</Tab>
      <Tab className="w-[32px] pl-[9px]"><Ic w={18} h={18}><path d="M9 12.500H.5v-10h11v6M3.500 10V8M6 10V5M8.500 8V6.500" /><path d="M8.500 13h7M12 9.500v7" strokeWidth="1.600" stroke="#444" /></Ic></Tab>
      <Tab className="w-[32px] pl-[9px]"><Ic w={18} h={18}><path d="M8 12.500H.5v-10h11v6M6 2.500v10M.5 7.500h11" /><path d="M8.500 13h7M12 9.500v7" strokeWidth="1.600" stroke="#444" /></Ic></Tab>
      <Tab className="w-[32px] pl-[9px]"><Ic w={18} h={18}><path d="M8 12L6 13 .5 12V2.500L6 4l5.500-1.500v6M6 4v9" /><path d="M8.500 13h7M12 9.500v7" strokeWidth="1.600" stroke="#444" /></Ic></Tab>
    </div>
  );
}

export default function App() {
  return (
    <div className="flex h-[911px] w-[1919px] flex-col overflow-hidden bg-[#f5f5f5] font-['Roboto',sans-serif]">
      <div className="h-[2px] shrink-0 bg-[#f7f7f7]" />
      <div className="flex h-[60px] shrink-0 items-center bg-[#cfe9ff] text-[19.500px] font-light tracking-[0.730px] text-[#0f6390]">
        <Ic w={14} h={14} className="ml-[31px]"><path d="M1.500 4.500H6L10 1.500V10L6 8H1.500zM3.500 8v4.500H6V8M12.500 3.500v5" stroke="#1a6c98" strokeWidth="1.300" /></Ic>
        <span className="ml-[18px] pt-px">Tableau Desktop Public Edition</span>
        <span className="ml-auto mr-[59px] pt-px">Buy Tableau</span>
      </div>
      <Toolbar />
      <div className="flex h-[747px] shrink-0 overflow-hidden">
        <DataPane />
        <Cards />
        <Main />
      </div>
      <Tabs />
    </div>
  );
}
